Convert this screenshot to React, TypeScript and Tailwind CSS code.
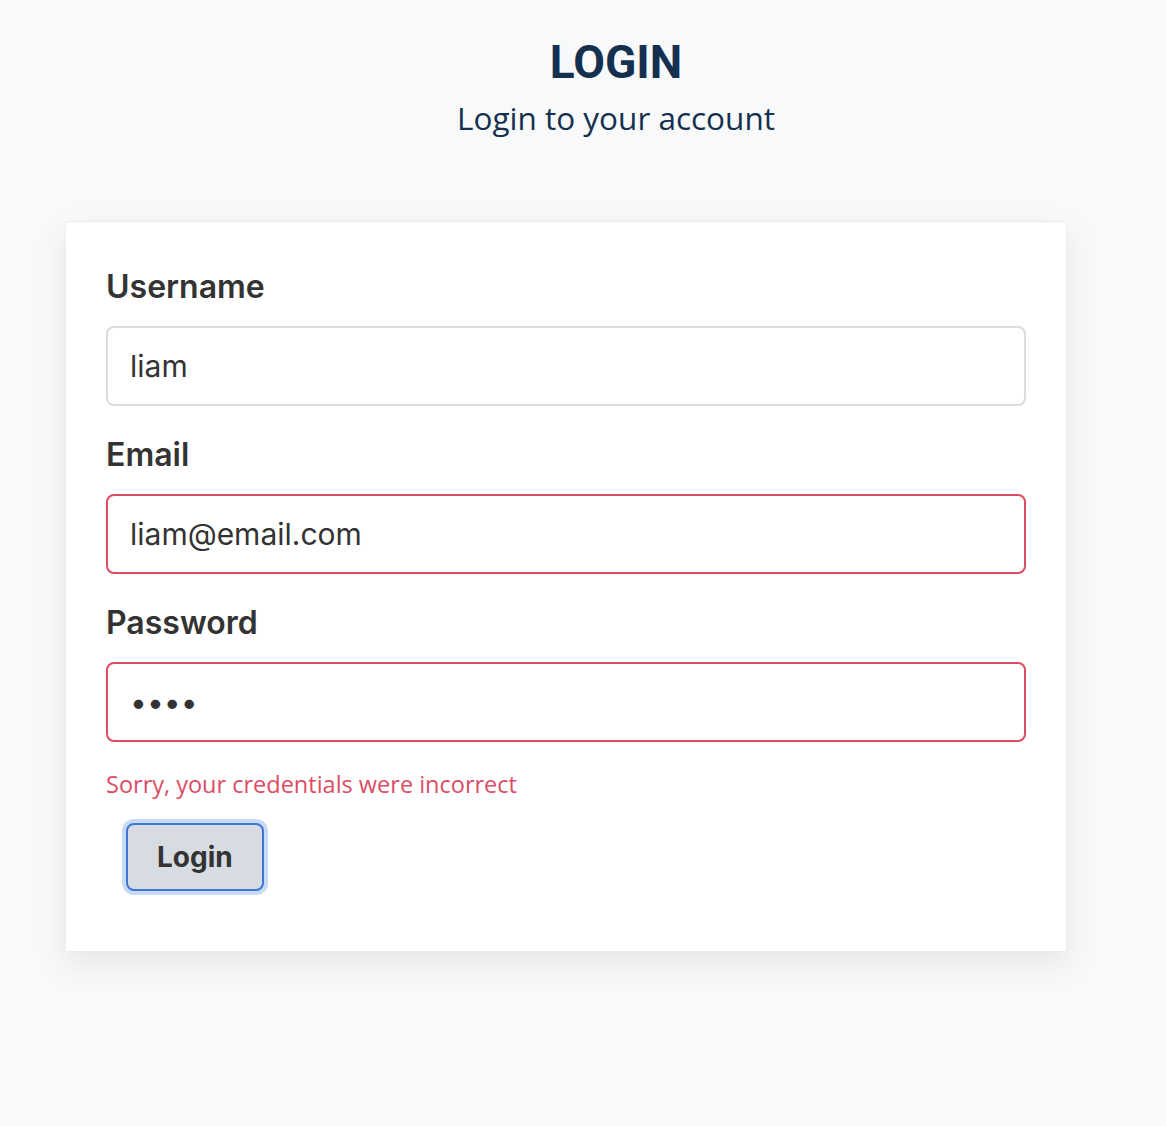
import React from 'react';

const inputBase =
  "w-full h-[80px] rounded-[8px] border-2 bg-white px-[22px] text-[30px] text-[#333] outline-none font-['Inter',sans-serif]";

function Field({ label, value, type = 'text', invalid = false }: { label: string; value: string; type?: string; invalid?: boolean }) {
  return (
    <div className="flex flex-col">
      <label className="mb-[15px] text-[32px] leading-[48px] font-semibold text-[#333] font-['Inter',sans-serif]">
        {label}
      </label>
      <input
        type={type}
        defaultValue={value}
        className={`${inputBase} ${invalid ? 'border-[#dc4c64]' : 'border-[#dcdcdc]'}`}
      />
    </div>
  );
}

export default function App() {
  return (
    <div className="min-h-[1126px] w-full bg-[#f8f9fa] pt-[35px]">
      <div className="pl-[66px] text-center text-[#15304f]">
        <h1 className="text-[46px] leading-[55px] font-bold font-['Roboto',sans-serif]">LOGIN</h1>
        <p className="mt-[10px] text-[31.5px] leading-[36px] font-['Open_Sans',sans-serif]">Login to your account</p>
      </div>

      <div className="ml-[65px] mt-[85px] w-[1002px] border border-[#ececec] bg-white px-[40px] pt-[41px] pb-[40px] shadow-[0_12px_32px_rgba(0,0,0,0.08)]">
        <div className="flex flex-col gap-[25px]">
          <Field label="Username" value="liam" />
          <Field label="Email" value="liam@email.com" invalid />
          <Field label="Password" value="abcd" type="password" invalid />
        </div>
        <p className="mt-[24px] text-[23.5px] leading-[36px] text-[#dc4c64] font-['Open_Sans',sans-serif]">
          Sorry, your credentials were incorrect
        </p>
        <button className="mt-[21px] ml-[20px] mb-[20px] rounded-[8px] border-2 border-[#3b76d8] bg-[#d7dce3] px-[29px] py-[12px] text-[28px] leading-[40px] font-bold text-[#333] ring-4 ring-[#c9daf5] font-['Inter',sans-serif]">
          Login
        </button>
      </div>
    </div>
  );
}
